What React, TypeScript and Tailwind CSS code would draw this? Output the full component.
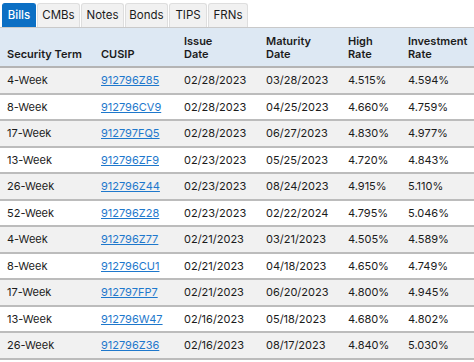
const tabs = ["Bills", "CMBs", "Notes", "Bonds", "TIPS", "FRNs"];
const tabWidths = ["w-[34px]", "w-[43px]", "w-[43px]", "w-[43px]", "w-[38px]", "w-[40px]"];

const rows = [
  ["4-Week", "912796Z85", "02/28/2023", "03/28/2023", "4.515%", "4.594%"],
  ["8-Week", "912796CV9", "02/28/2023", "04/25/2023", "4.660%", "4.759%"],
  ["17-Week", "912797FQ5", "02/28/2023", "06/27/2023", "4.830%", "4.977%"],
  ["13-Week", "912796ZF9", "02/23/2023", "05/25/2023", "4.720%", "4.843%"],
  ["26-Week", "912796Z44", "02/23/2023", "08/24/2023", "4.915%", "5.110%"],
  ["52-Week", "912796Z28", "02/23/2023", "02/22/2024", "4.795%", "5.046%"],
  ["4-Week", "912796Z77", "02/21/2023", "03/21/2023", "4.505%", "4.589%"],
  ["8-Week", "912796CU1", "02/21/2023", "04/18/2023", "4.650%", "4.749%"],
  ["17-Week", "912797FP7", "02/21/2023", "06/20/2023", "4.800%", "4.945%"],
  ["13-Week", "912796W47", "02/16/2023", "05/18/2023", "4.680%", "4.802%"],
  ["26-Week", "912796Z36", "02/16/2023", "08/17/2023", "4.840%", "5.030%"],
];

const App = () => {
  return (
    <div className="w-[474px] h-[362px] bg-white overflow-hidden text-[11px] text-[#1b1b1b] font-['Inter','Liberation_Sans',sans-serif]">
      <div className="flex gap-px pl-[2px] pt-[3px] border-b border-[#c9c9c9]">
        {tabs.map((t, i) => (
          <div
            key={t}
            className={`${tabWidths[i]} h-[24px] flex items-center justify-center rounded-t-[3px] border border-b-0 text-[11.5px] ${
              i === 0
                ? "bg-[#0b6fc4] border-[#0b6fc4] text-white font-medium"
                : "bg-[#f1f1f1] border-[#dedede] text-[#1b1b1b]"
            }`}
          >
            {t}
          </div>
        ))}
      </div>
      <table className="w-[474px] table-fixed border-collapse">
        <colgroup>
          <col className="w-[94px]" />
          <col className="w-[83px]" />
          <col className="w-[82px]" />
          <col className="w-[82px]" />
          <col className="w-[60px]" />
          <col className="w-[73px]" />
        </colgroup>
        <thead>
          <tr className="bg-[#dde8f3] h-[39px] border-b-2 border-[#b4b4b4] font-semibold leading-[13px] text-left align-bottom">
            <th className="pl-[7px] pb-[5px] font-semibold">Security Term</th>
            <th className="pl-[7px] pb-[5px] font-semibold">CUSIP</th>
            <th className="pl-[7px] pb-[5px] font-semibold">
              Issue
              <br />
              Date
            </th>
            <th className="pl-[7px] pb-[5px] font-semibold">
              Maturity
              <br />
              Date
            </th>
            <th className="pl-[7px] pb-[5px] font-semibold">
              High
              <br />
              Rate
            </th>
            <th className="pl-[7px] pb-[5px] font-semibold">
              Investment
              <br />
              Rate
            </th>
          </tr>
        </thead>
        <tbody>
          {rows.map((r, i) => (
            <tr
              key={i}
              className={`h-[26.5px] border-b-2 border-[#bcbcbc] ${
                i % 2 === 0 ? "bg-[#f1f1f1]" : "bg-white"
              }`}
            >
              {r.map((c, j) => (
                <td key={j} className="pl-[7px] p-0">
                  {j === 1 ? (
                    <span className="text-[#1e78cc] underline">{c}</span>
                  ) : (
                    c
                  )}
                </td>
              ))}
            </tr>
          ))}
        </tbody>
      </table>
    </div>
  );
};

export default App;
